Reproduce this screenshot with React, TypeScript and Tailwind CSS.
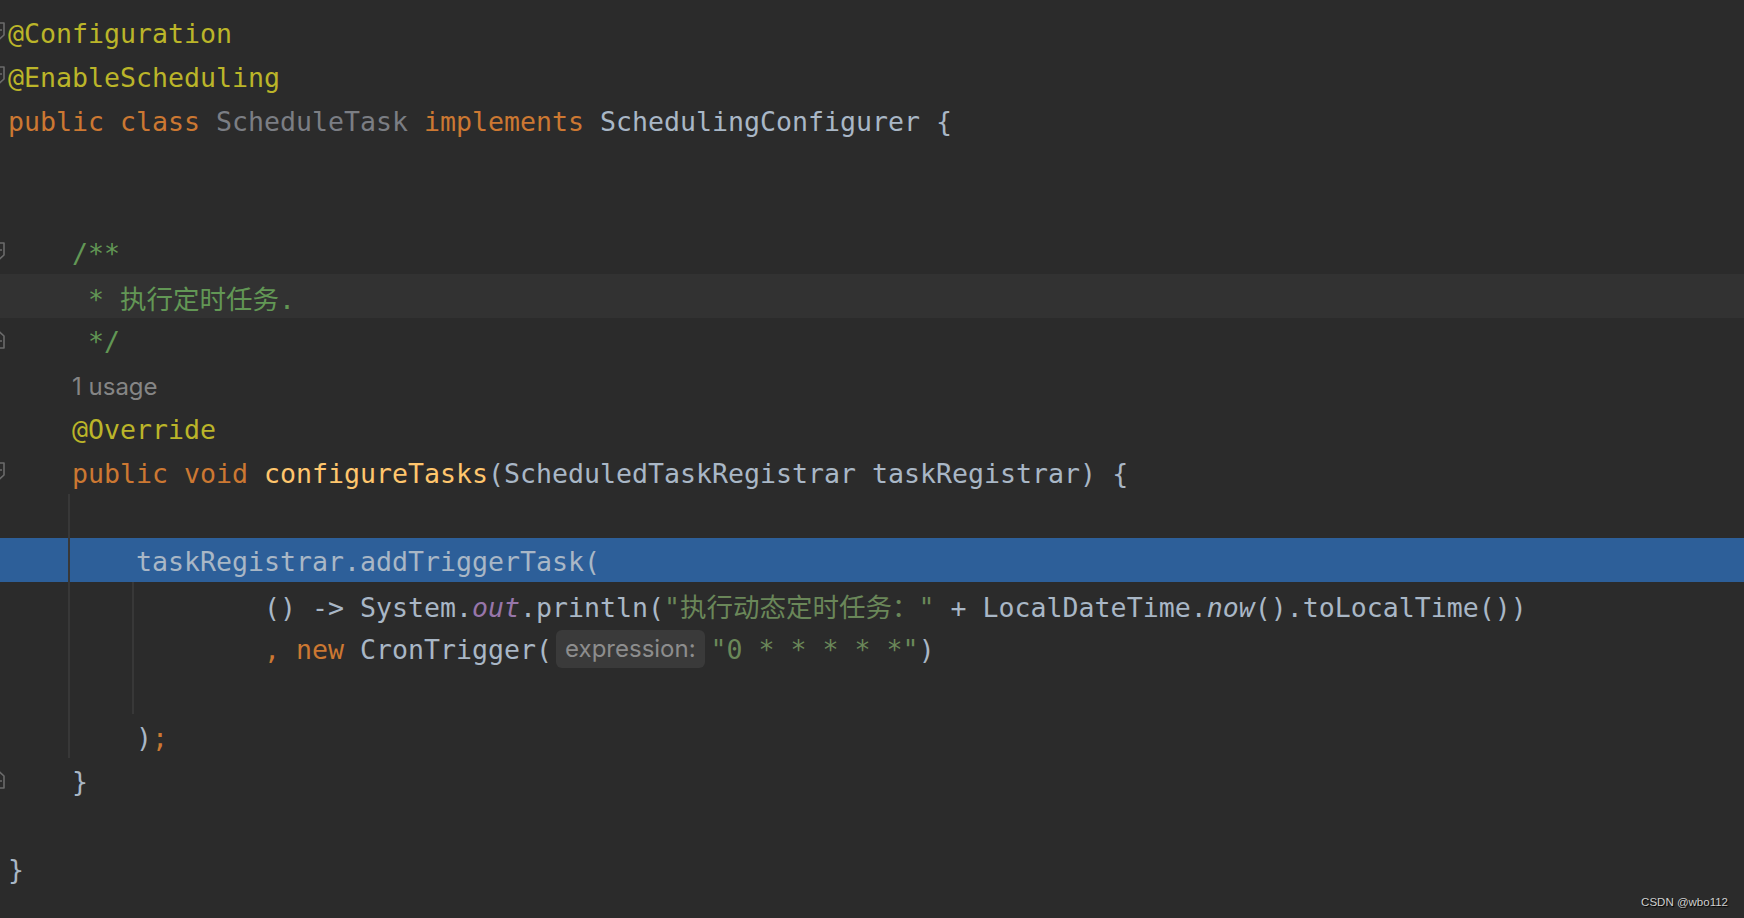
import React from 'react';

// Darcula-like palette
const KW = 'text-[#cc7832]';
const ANN = 'text-[#bbb529]';
const DOC = 'text-[#629755]';
const STR = 'text-[#6a8759]';
const FN = 'text-[#ffc66d]';
const FIELD = 'text-[#9876aa] italic';
const UNUSED = 'text-[#7b7e84]';

function Cjk({ children }: { children: React.ReactNode }) {
  return <span className="font-['Noto_Sans_CJK_SC',sans-serif] text-[26.5px]">{children}</span>;
}

function FoldMark({ kind }: { kind: 'start' | 'end' }) {
  // only the right edge peeks into view, like the cut-off gutter in the shot
  const d = kind === 'start' ? 'M1 1 H12 V13 L6.5 18 L1 13 Z' : 'M1 6 L6.5 1 L12 6 V18 H1 Z';
  return (
    <svg
      className="absolute left-[-8px] top-[12px]"
      width="14"
      height="20"
      viewBox="0 0 14 20"
      fill="none"
    >
      <path d={d} stroke="#6b6b6b" strokeWidth="1.6" strokeLinejoin="round" />
      <path d={kind === 'start' ? 'M4 8 H10' : 'M4 11 H10'} stroke="#6b6b6b" strokeWidth="1.6" />
    </svg>
  );
}

function Hint({ children }: { children: React.ReactNode }) {
  return (
    <span className="inline-block align-top mt-[2px] mx-[4px] mr-[6px] h-[38px] leading-[38px] px-[9px] rounded-[6px] bg-[#3a3a3a] text-[#8d8d8d] font-['Inter',sans-serif] text-[24px]">
      {children}
    </span>
  );
}

type Line = {
  body: React.ReactNode;
  bg?: string;
  fold?: 'start' | 'end';
};

const lines: Line[] = [
  { body: <span className={ANN}>@Configuration</span>, fold: 'start' },
  { body: <span className={ANN}>@EnableScheduling</span>, fold: 'start' },
  {
    body: (
      <>
        <span className={KW}>public class </span>
        <span className={UNUSED}>ScheduleTask </span>
        <span className={KW}>implements </span>
        SchedulingConfigurer {'{'}
      </>
    ),
  },
  { body: '' },
  { body: '' },
  { body: <span className={DOC}>{'    /**'}</span>, fold: 'start' },
  {
    body: (
      <span className={DOC}>
        {'     * '}
        <Cjk>执行定时任务</Cjk>.
      </span>
    ),
    bg: 'bg-[#323232]',
  },
  { body: <span className={DOC}>{'     */'}</span>, fold: 'end' },
  {
    body: (
      <>
        {'    '}
        <span className="font-['Inter',sans-serif] text-[24px] text-[#858585]">1 usage</span>
      </>
    ),
  },
  { body: <span className={ANN}>{'    @Override'}</span> },
  {
    body: (
      <>
        <span className={KW}>{'    public void '}</span>
        <span className={FN}>configureTasks</span>
        (ScheduledTaskRegistrar taskRegistrar) {'{'}
      </>
    ),
    fold: 'start',
  },
  { body: '' },
  { body: '        taskRegistrar.addTriggerTask(', bg: 'bg-[#2d5f99]' },
  {
    body: (
      <>
        {'                () -> System.'}
        <span className={FIELD}>out</span>
        .println(
        <span className={STR}>
          "<Cjk>执行动态定时任务：</Cjk>"
        </span>
        {' + LocalDateTime.'}
        <span className="italic">now</span>
        ().toLocalTime())
      </>
    ),
  },
  {
    body: (
      <>
        {'                '}
        <span className={KW}>, new </span>
        CronTrigger(
        <Hint>expression:</Hint>
        <span className={STR}>"0 * * * * *"</span>)
      </>
    ),
  },
  { body: '' },
  {
    body: (
      <>
        {'        )'}
        <span className={KW}>;</span>
      </>
    ),
  },
  { body: '    }', fold: 'end' },
  { body: '' },
  { body: '}' },
];

export default function App() {
  return (
    <div className="relative h-[918px] w-full overflow-hidden bg-[#2b2b2b] pt-[10px]">
      <div className="relative font-['DejaVu_Sans_Mono','Noto_Sans_CJK_SC',monospace] text-[26.58px] text-[#a9b7c6]">
        {lines.map((ln, i) => (
          <div key={i} className={`relative h-[44px] whitespace-pre pl-[8px] pt-[1.5px] leading-[44px] ${ln.bg ?? ''}`}>
            {ln.fold && <FoldMark kind={ln.fold} />}
            {ln.body}
          </div>
        ))}

        {/* indent guides */}
        <div className="absolute left-[68px] top-[484px] h-[264px] w-[2px] bg-[#383838]" />
        <div className="absolute left-[132px] top-[572px] h-[132px] w-[2px] bg-[#383838]" />
      </div>

      <div className="absolute bottom-[7px] right-[16px] font-['Liberation_Sans',Arial,sans-serif] text-[11.5px] text-[#d0d0d0] [text-shadow:1px_1px_1px_#000]">
        CSDN @wbo112
      </div>
    </div>
  );
}
